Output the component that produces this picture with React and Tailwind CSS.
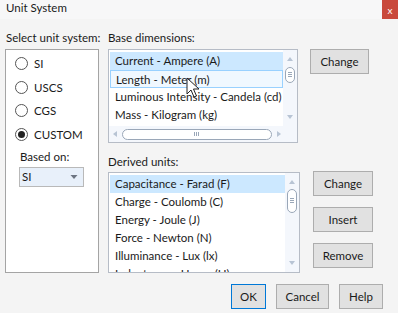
const font = { fontFamily: 'Lato, "Noto Sans", sans-serif' };

const baseRows = [
  "Current - Ampere (A)",
  "Length - Meter (m)",
  "Luminous Intensity - Candela (cd)",
  "Mass - Kilogram (kg)",
];

const derivedRows = [
  "Capacitance - Farad (F)",
  "Charge - Coulomb (C)",
  "Energy - Joule (J)",
  "Force - Newton (N)",
  "Illuminance - Lux (lx)",
  "Inductance - Henry (H)",
];

function Radio({ label, checked }) {
  return (
    <div className="flex items-center h-[23.5px]">
      <span className="w-[13px] h-[13px] rounded-full border border-[#555] bg-white flex items-center justify-center">
        {checked && <span className="w-[7px] h-[7px] rounded-full bg-[#222]" />}
      </span>
      <span className="ml-[6px]">{label}</span>
    </div>
  );
}

function Btn({ children, w = "w-[60px]", primary }) {
  return (
    <div
      className={`${w} h-[25px] flex items-center justify-center bg-[#e1e1e1] border ${
        primary ? "border-[#0078d7]" : "border-[#adadad]"
      }`}
    >
      {children}
    </div>
  );
}

function VScroll({ thumbTop, thumbH }) {
  return (
    <div className="w-[14px] flex flex-col items-center bg-[#f4f7fc]">
      <svg width="8" height="14" viewBox="0 0 8 14" className="mt-[2px]">
        <path d="M1 9 L4 5 L7 9 Z" fill="#b8c4d4" />
      </svg>
      <div
        className="w-[10px] rounded-full border border-[#9aa7b8] bg-white flex items-center justify-center"
        style={{ marginTop: thumbTop, height: thumbH }}
      >
        <svg width="4" height="6" viewBox="0 0 4 6">
          <path d="M0 0.5H4M0 2.5H4M0 4.5H4" stroke="#9aa7b8" strokeWidth="1" />
        </svg>
      </div>
      <div className="flex-1" />
      <svg width="8" height="14" viewBox="0 0 8 14" className="mb-[2px]">
        <path d="M1 5 L4 9 L7 5 Z" fill="#b8c4d4" />
      </svg>
    </div>
  );
}

export default function App() {
  return (
    <div className="w-[398px] h-[313px] bg-[#f4f4f4] text-[11.5px] text-[#1a1a1a] relative overflow-hidden" style={font}>
      {/* title bar */}
      <div className="h-[19px] flex items-start justify-between bg-[#f7f7f8]">
        <span className="pl-[6px] leading-[15px]">Unit System</span>
        <div className="w-[16px] h-[19px] bg-[#c9493c] text-white text-[10px] flex items-center justify-center leading-none">
          x
        </div>
      </div>

      <div className="flex pt-[10px]">
        {/* left column */}
        <div className="ml-[5px] w-[94px] flex flex-col">
          <div className="h-[20px] pl-[1px] leading-[18px] whitespace-nowrap">Select unit system:</div>
          <div className="h-[224px] border border-[#a4a4a4] bg-white pl-[9px] pt-[2px]">
            <Radio label="SI" />
            <Radio label="USCS" />
            <Radio label="CGS" />
            <Radio label="CUSTOM" checked />
            <div className="pl-[5px] mt-[2px] leading-[18px]">Based on:</div>
            <div className="ml-[4px] mt-[1px] w-[65px] h-[20px] border border-[#b9b9b9] bg-[#e8f0fa] flex items-center justify-between px-[2px]">
              <span>SI</span>
              <svg width="8" height="6" viewBox="0 0 8 6" className="mr-[3px]">
                <path d="M0.5 1 L7.5 1 L4 5 Z" fill="#6d7582" />
              </svg>
            </div>
          </div>
        </div>

        {/* middle column */}
        <div className="ml-[9px] flex flex-col">
          <div className="h-[20px] leading-[18px]">Base dimensions:</div>
          <div className="w-[190px] h-[94px] border border-[#b6bcc6] bg-white flex flex-col">
            <div className="flex flex-1">
              <div className="flex-1 pt-[2px] pl-[1px] overflow-hidden">
                {baseRows.map((r, i) => (
                  <div
                    key={r}
                    className={`h-[18px] pl-[5px] whitespace-nowrap leading-[18px] ${
                      i === 0
                        ? "bg-[#cce8ff]"
                        : i === 1
                        ? "border border-[#99d1ff] bg-[#f0f8ff] leading-[16px] pl-[4px]"
                        : ""
                    }`}
                  >
                    {r}
                  </div>
                ))}
              </div>
              <VScroll thumbTop={1} thumbH={16} />
            </div>
            <div className="h-[16px] flex items-center pl-[3px] pr-[15px] bg-[#f4f7fc]">
              <svg width="6" height="8" viewBox="0 0 6 8">
                <path d="M5 1 L1 4 L5 7 Z" fill="#b8c4d4" />
              </svg>
              <div className="flex-1 mx-[4px] h-[11px] rounded-full border border-[#9aa7b8] bg-white flex items-center justify-center">
                <svg width="6" height="4" viewBox="0 0 6 4">
                  <path d="M0.5 0V4M2.5 0V4M4.5 0V4" stroke="#9aa7b8" strokeWidth="1" />
                </svg>
              </div>
              <svg width="6" height="8" viewBox="0 0 6 8">
                <path d="M1 1 L5 4 L1 7 Z" fill="#b8c4d4" />
              </svg>
            </div>
          </div>

          <div className="mt-[10px] h-[19px] leading-[18px]">Derived units:</div>
          <div className="w-[192px] h-[101px] border border-[#b6bcc6] bg-white flex overflow-hidden">
            <div className="flex-1 pt-[2px] pl-[1px] overflow-hidden">
              {derivedRows.map((r, i) => (
                <div
                  key={r}
                  className={`h-[18px] pl-[5px] whitespace-nowrap leading-[18px] ${
                    i === 0 ? "bg-[#cce8ff]" : ""
                  }`}
                >
                  {r}
                </div>
              ))}
            </div>
            <VScroll thumbTop={0} thumbH={24} />
          </div>
        </div>

        {/* right buttons */}
        <div className="flex flex-col">
          <div className="ml-[10px] mt-[20px]">
            <Btn w="w-[59px]">Change</Btn>
          </div>
          <div className="ml-[13px] mt-[97px] flex flex-col gap-[11px]">
            <Btn>Change</Btn>
            <Btn>Insert</Btn>
            <Btn>Remove</Btn>
          </div>
        </div>
      </div>

      {/* bottom buttons */}
      <div className="flex justify-end gap-[10px] pr-[15px] mt-[11px]">
        <Btn w="w-[35px]" primary>OK</Btn>
        <Btn w="w-[53px]">Cancel</Btn>
        <Btn w="w-[44px]">Help</Btn>
      </div>

      {/* mouse cursor */}
      <svg className="absolute left-[186px] top-[77px]" width="14" height="22" viewBox="0 0 14 22">
        <path d="M1 1 L1 17 L5 13 L8 20 L10.5 19 L7.5 12 L13 12 Z" fill="#fff" stroke="#222" strokeWidth="1" strokeLinejoin="round" />
      </svg>
    </div>
  );
}
